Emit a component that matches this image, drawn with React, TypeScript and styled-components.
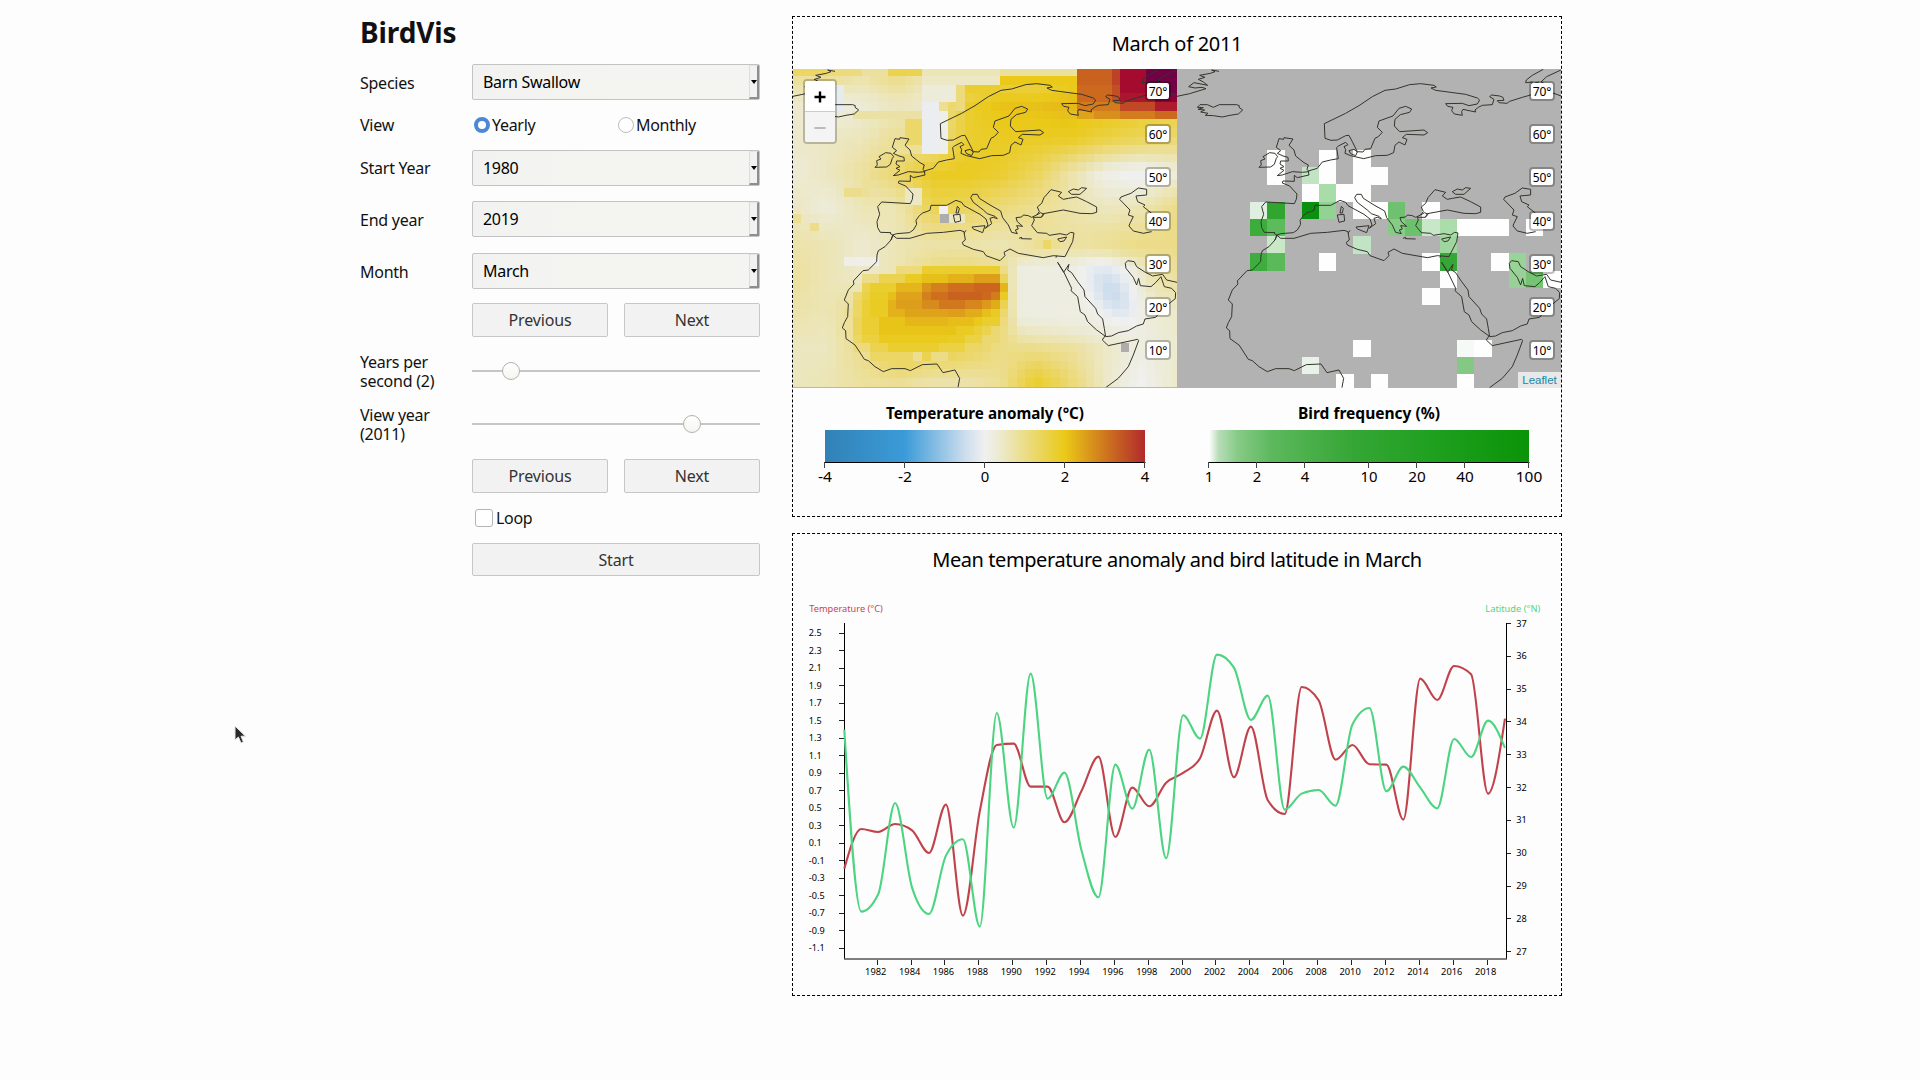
import React from "react";
import styled, { createGlobalStyle } from "styled-components";

const FONT = `"Noto Sans", "Open Sans", sans-serif`;

const GlobalStyle = createGlobalStyle`
  * { box-sizing: border-box; }
  body {
    margin: 0;
    height: 1080px;
    overflow: hidden;
    background: #fdfdfd;
    color: #000;
    font: 16px/18.5px ${FONT};
  }
`;

const Page = styled.main`
  display: flex;
  gap: 32px;
  padding: 16px 0 0 360px;
`;

const Sidebar = styled.section`
  width: 400px;
  color: #111;
`;

const Heading = styled.h1`
  margin: 0 0 15px;
  height: 33px;
  font-size: 28px;
  line-height: 33px;
  font-weight: 700;
  letter-spacing: -0.1px;
`;

const Row = styled.div<{ $h: number; $gap: number }>`
  display: grid;
  grid-template-columns: 112px 288px;
  align-items: center;
  height: ${(p) => p.$h}px;
  margin-bottom: ${(p) => p.$gap}px;
`;

const Name = styled.label<{ $drop?: number }>`
  white-space: pre-line;
  letter-spacing: -0.25px;
  padding-top: ${(p) => p.$drop ?? 0}px;
`;

const Select = styled.button`
  display: flex;
  align-items: stretch;
  justify-content: space-between;
  height: 100%;
  width: 100%;
  padding: 0 0 0 10px;
  border: 1px solid #c3c3c3;
  border-radius: 2px;
  background: linear-gradient(90deg, #f2f2f2, #f4f4f0 50%);
  font: 16px/34px ${FONT};
  color: #000;
`;

const SelectText = styled.span`
  letter-spacing: -0.3px;
`;

const Arrow = styled.span`
  display: flex;
  align-items: center;
  justify-content: center;
  width: 10px;
  border: solid;
  border-width: 1px 2px 2px 1px;
  border-color: #e4e4e4 #8e8e8e #8e8e8e #dcdcdc;
  background: #f2f2f2;
  &::after {
    content: "";
    border: 3px solid transparent;
    border-top: 4px solid #000;
    border-bottom: 0;
  }
`;

const Buttons = styled.div`
  grid-column: 2;
  display: flex;
  gap: 16px;
  height: 100%;
`;

const Button = styled.button`
  flex: 1;
  padding: 0;
  border: 1px solid #c6c6c6;
  border-radius: 2px;
  background: #f2f2f2;
  color: #333;
  font: 16px/30px ${FONT};
  letter-spacing: -0.15px;
`;

const Choices = styled.div`
  display: grid;
  grid-template-columns: 144px 144px;
`;

const Choice = styled.label<{ $gap: number; $pad: number; $second?: boolean }>`
  grid-column: ${(p) => (p.$second ? 2 : "auto")};
  display: flex;
  align-items: center;
  gap: ${(p) => p.$gap}px;
  padding-left: ${(p) => p.$pad}px;
  letter-spacing: -0.3px;
`;

const Radio = styled.span<{ $on?: boolean }>`
  width: 16px;
  height: 16px;
  border-radius: 50%;
  background: #fff;
  border: ${(p) => (p.$on ? "4.5px solid #4f87d6" : "1px solid #bdbdbd")};
`;

const Checkbox = styled.span`
  width: 18px;
  height: 18px;
  border: 1px solid #b4b4b4;
  border-radius: 3px;
  background: #fff;
`;

const Slider = styled.div`
  display: flex;
  align-items: center;
  height: 20px;
  margin-top: -1px;
  background: linear-gradient(#c6c6c6, #c6c6c6) center / 100% 2px no-repeat;
`;

const Thumb = styled.span`
  width: 18px;
  height: 18px;
  border-radius: 50%;
  border: 1px solid #b3b3ab;
  background: linear-gradient(#fff, #f5f5f0);
`;

const Panels = styled.section`
  display: flex;
  flex-direction: column;
  gap: 16px;
  width: 770px;
`;

const Panel = styled.article<{ $h: number }>`
  height: ${(p) => p.$h}px;
  border: 1px dashed #000;
`;

const Title = styled.h2<{ $h: number; $line: number; $ls: number }>`
  margin: 0;
  height: ${(p) => p.$h}px;
  line-height: ${(p) => p.$line}px;
  font-size: 20px;
  font-weight: 400;
  text-align: center;
  letter-spacing: ${(p) => p.$ls}px;
`;

const Maps = styled.div`
  display: grid;
  grid-template-columns: 384px 384px;
  height: 319px;
`;

const MapBox = styled.div`
  position: relative;
  overflow: hidden;
  background: #b2b2b2;
  svg { display: block; }
`;

const ZoomControl = styled.div`
  position: absolute;
  left: 10px;
  top: 10px;
  width: 34px;
  border: 2px solid rgba(0, 0, 0, 0.22);
  border-radius: 4px;
  background-clip: padding-box;
`;

const ZoomKey = styled.div<{ $off?: boolean }>`
  height: ${(p) => (p.$off ? 30 : 31)}px;
  border-bottom: ${(p) => (p.$off ? 0 : 1)}px solid #ccc;
  border-radius: ${(p) => (p.$off ? "0 0 2px 2px" : "2px 2px 0 0")};
  background: ${(p) => (p.$off ? "#f4f4f4" : "#fff")};
  display: grid;
  place-items: center;
  padding-top: 2px;
  color: ${(p) => (p.$off ? "#bbb" : "#000")};
`;

const LatBadge = styled.span`
  position: absolute;
  right: 6px;
  transform: translateY(-50%);
  width: 26px;
  height: 20px;
  border: 2px solid rgba(0, 0, 0, 0.25);
  border-radius: 4px;
  background: #fff;
  background-clip: padding-box;
  font-size: 12px;
  line-height: 17px;
  text-align: center;
  letter-spacing: -0.2px;
`;

const Credit = styled.a`
  position: absolute;
  right: 0;
  bottom: 0;
  width: 43px;
  height: 16px;
  background: rgba(255, 255, 255, 0.7);
  color: #1a86a4;
  font: 11.5px/16px "Liberation Sans", Arial, sans-serif;
  text-align: center;
`;

const Legends = styled.div`
  display: grid;
  grid-template-columns: 384px 384px;
`;

const Cursor = styled.svg`
  position: absolute;
  left: 234px;
  top: 725px;
`;

/* ---------- map data ---------- */

const COAST_NORTH = [
  "M24 109L62 101L111 86L99 82L78 84L59 80L75 68L116 76L103 66L88 58L108 52L92 46L124 40L138 35L128 30L150 34",
  "M85 142L93 134L115 134L133 142L151 134L203 134L211 137L210 142L221 150L208 162L183 166L160 171L133 167L109 166L117 160L95 156L107 150L87 148L103 143Z",
  "M1176 108L1155 100L1085 105L1060 112L1022 124L1014 130L990 128L985 122L1005 121L1002 112L992 108L968 105L962 110L975 118L970 134L940 136L928 142L918 150L920 156L905 153L882 148L878 155L880 166L856 162L848 152L852 142L836 139L830 131L880 130L900 137L925 132L932 120L925 114L890 103L800 91L786 84L802 81L795 76L755 71L722 74L680 87L648 91L610 110L570 137L530 160L466 191L468 235L486 241L505 240L530 227L540 226L550 245L565 275L582 276L588 268L605 266L618 235L628 230L640 217L625 202L630 183L672 168L690 145L710 139L728 147L722 157L694 164L678 178L676 198L692 215L765 210L776 218L765 225L712 223L700 233L714 238L708 255L690 246L678 256L674 278L655 286L620 287L584 296L545 287L528 280L530 268L525 260L537 254L530 247L508 258L503 263L508 296L485 300L460 306L445 325L418 333L420 345L385 353L376 346L376 364L342 363L340 369L362 378L384 402L382 418L376 431L290 426L278 440L284 463L276 485L278 503L286 517L318 518",
  "M540 272L555 268L565 276L560 287L545 281Z",
  "M345 233L372 237L360 256L375 270L380 288L395 300L405 308L418 315L414 328L420 335L400 337L370 335L340 345L325 347L345 331L333 325L345 320L333 312L335 303L358 303L357 292L342 288L325 280L335 272L322 262L330 236L344 238Z",
  "M326 290L318 280L302 278L282 290L288 297L275 302L277 315L270 322L305 321L316 313L322 295Z",
  "M1123 28L1090 46L1072 60L1070 68L1090 66L1088 72L1110 66",
  "M1176 30L1133 50L1116 66L1130 72",
  "M1085 388L1060 384L1038 400L1008 411L1004 418L1035 450L1030 465L1045 470L1035 490L1032 498L1045 513L1075 520L1100 515",
  "M1085 388L1085 405L1053 408L1058 425L1080 435L1075 440L1100 460L1088 475",
];

const COAST_MED = [
  "M30 145L38 150L50 146L88 143L100 135L110 118L108 106L118 92L128 84L150 76L153 61L200 61L228 46L245 52L252 62L300 88L318 102L324 120L316 130L335 116L330 100L340 97L352 101L345 94L322 86L310 75L280 52L272 38L278 28L292 28L298 40L330 60L362 78L368 98L385 120L395 142L412 146L406 135L415 132L410 122L428 124L412 110L408 98L425 96L430 90L445 92L455 97L470 90L478 80L472 66L485 55L492 38L513 14L545 22L535 33L550 43L565 40L590 36L620 50L650 66L650 82L635 86L600 85L550 75L490 86L484 97L460 97L463 105L455 122L472 143L500 145L508 151L540 146L560 150L572 142L582 144L578 170L555 215L520 212L490 218L415 205L390 192L372 202L375 212L360 227L318 212L310 200L280 193L250 180L247 172L256 165L252 140L240 136L190 142L140 145L90 160L50 160L38 150L33 165",
  "M470 90L482 83L492 88L484 97",
  "M565 20L580 12L595 15L605 8L620 10L600 28L575 28Z",
  "M252 145L258 136M530 212L528 218",
  "M232 64L238 70L235 84L228 84Z",
  "M220 90L240 88L242 108L225 112Z",
  "M276 126L315 122L308 143L280 132Z",
  "M417 160L425 157L424 161L455 162",
  "M533 162L560 156L552 168L540 170Z",
];

const COAST_SOUTH = [
  "M325 45L318 60L300 80L280 92L276 105L275 125L250 150L234 152L205 183L207 192L190 210L178 240L190 252L188 290L178 308L172 324L182 332L183 356L210 375L222 393L238 418L250 422L270 440L295 455L320 446L360 446L376 452L412 434L456 432L474 458L510 450L524 475L519 503",
  "M818 127L836 155L860 205L858 212L878 230L886 275L900 285L908 305L935 330L960 348L952 360L970 377L1058 358L1061 362L1045 405L1030 440L1000 475L962 503",
  "M818 127L836 157L852 133L848 150L860 158L878 185L897 210L900 230L932 265L938 282L953 297L958 325L962 350L980 348L1000 338L1030 332L1055 318L1075 312L1080 297L1112 292L1130 270L1156 248L1171 236L1172 218L1160 205L1138 200L1128 170L1112 188L1098 200L1066 197L1061 175L1055 195L1045 172L1023 145L1021 130L1028 122L1048 125L1055 140L1078 155L1103 168L1133 163L1145 180L1176 187",
];

function Coast() {
  return (
    <g fill="none" stroke="#34342c" strokeWidth="3" strokeLinejoin="round">
      <g transform="translate(-8 -9) scale(.3333)">
        {COAST_NORTH.map((d) => <path key={d} d={d} />)}
      </g>
      <g transform="translate(87 116) scale(.3333)">
        {COAST_MED.map((d) => <path key={d} d={d} />)}
      </g>
      <g transform="translate(-8 151) scale(.3333)">
        {COAST_SOUTH.map((d) => <path key={d} d={d} />)}
      </g>
    </g>
  );
}

/* anomaly samples, one every 104 units east and south */
const FIELD = [
  [1.0, 1.2, 0.8, 1.2, 0.6, 0.6, 1.2, 1.2, 1.6, 2.5, 2.5, 2.5],
  [0.4, 0.15, 0.3, 0.5, 0.4, 1.8, 2.1, 2.1, 2.2, 2.2, 2.0, 1.8],
  [0.4, 0.45, 0.55, 0.9, 0.7, 1.75, 1.9, 1.9, 1.9, 1.6, 1.4, 1.2],
  [0.3, 0.5, 0.8, 1.25, 1.9, 1.95, 1.8, 1.4, 0.7, 0.1, -0.1, 0.2],
  [0.5, 0.25, 0.6, 0.6, 1.5, 1.4, 1.1, 0.9, 0.7, 0.5, 0.6, 1.0],
  [0.7, 0.6, 0.35, 0.6, 0.7, 0.7, 0.6, 0.8, 0.8, 0.9, 1.0, 1.0],
  [0.8, 0.6, 0.4, 0.6, 1.1, 1.2, 1.0, 0.5, 0.3, 0.3, 0.6, 0.8],
  [0.7, 0.6, 1.0, 1.6, 1.8, 1.7, 1.1, 0.6, 0.3, 0.2, 0.3, 0.4],
  [0.5, 0.5, 1.0, 1.8, 1.75, 1.5, 1.0, 0.9, 0.8, 0.45, 0.2, 0.35],
  [0.5, 0.6, 0.8, 0.9, 0.7, 0.7, 0.9, 1.8, 1.2, 0.45, 0.0, 0.4],
];

/* x0, y0, x1, y1, anomaly */
const PATCHES: number[][] = [
  [24, 27, 128, 48, 1.3], [128, 27, 230, 48, 1.1], [230, 27, 308, 48, 0.8], [308, 27, 411, 48, 1.5],
  [411, 27, 645, 48, 0.6], [645, 27, 879, 48, 0.8], [411, 48, 645, 75, 0.45], [645, 48, 879, 75, 2.0],
  [515, 75, 540, 152, 1.1], [540, 75, 645, 101, 1.8],
  [150, 75, 180, 152, -0.15], [204, 152, 411, 178, 0.75], [360, 178, 411, 256, 1.25],
  [411, 75, 515, 127, 0.25], [411, 127, 465, 282, -0.08], [465, 152, 490, 282, 0.08],
  [282, 256, 411, 282, 0.85], [180, 385, 230, 411, 0.95], [230, 360, 256, 411, 0.85], [360, 385, 411, 436, 0.45],
  [24, 462, 50, 488, 0.9], [75, 488, 101, 514, 0.95],
  [465, 436, 490, 462, 0], [490, 462, 540, 488, 0.5],
  [182, 588, 282, 618, 0.1],
  [750, 530, 828, 565, 0.9], [776, 535, 804, 560, 1.3],
  [879, 27, 980, 75, 3.1], [980, 27, 1007, 75, 3.6], [1007, 27, 1085, 75, 4.5], [1085, 27, 1176, 75, 5.3],
  [879, 75, 980, 127, 3.0], [980, 75, 1007, 127, 3.4], [1007, 75, 1110, 101, 4.5], [1110, 75, 1176, 101, 5.3],
  [1007, 101, 1110, 127, 4.3], [1110, 101, 1176, 127, 5.0],
  [879, 127, 1007, 152, 2.8], [1007, 127, 1110, 152, 3.5], [1110, 127, 1176, 152, 4.2],
  [879, 152, 930, 178, 2.4], [930, 152, 1007, 178, 2.6], [1007, 152, 1110, 178, 2.8], [1110, 152, 1176, 178, 3.0],
];

/* Saharan hot spot: top edge of each row, then [start x, anomaly] steps */
const HOTSPOT: [number, [number, number][]][] = [
  [618, [[333, 1.1], [411, 1.8], [645, 1.0], [672, 0]]],
  [644, [[230, 1.0], [282, 1.5], [360, 1.9], [411, 2.1], [490, 2.25], [566, 2.45], [645, 1.4], [672, 0]]],
  [669, [[230, 1.5], [256, 1.8], [333, 2.2], [411, 2.55], [440, 2.75], [490, 2.95], [570, 3.05], [645, 2.2], [672, 0]]],
  [695, [[204, 1.2], [230, 1.6], [256, 1.85], [308, 2.1], [333, 2.4], [411, 2.75], [440, 2.95], [490, 3.1], [592, 3.0], [620, 2.8], [645, 1.9], [672, 0]]],
  [721, [[204, 1.3], [230, 1.7], [256, 1.9], [308, 2.25], [333, 2.45], [411, 2.65], [465, 2.85], [540, 2.7], [592, 2.5], [620, 2.3], [645, 1.5], [672, 0]]],
  [747, [[204, 1.3], [230, 1.7], [256, 1.9], [308, 2.25], [360, 2.4], [490, 2.45], [540, 2.3], [592, 2.1], [620, 1.9], [645, 1.2], [672, 0]]],
  [773, [[204, 1.4], [230, 1.75], [282, 2.05], [360, 2.2], [500, 2.12], [566, 2.0], [592, 1.8], [645, 1.1], [672, 0]]],
  [799, [[204, 1.4], [230, 1.75], [282, 2.05], [515, 1.9], [566, 1.7], [592, 1.5], [620, 1.2], [645, 0]]],
  [825, [[204, 1.3], [230, 1.65], [282, 1.95], [490, 1.85], [540, 1.6], [592, 1.2], [645, 0]]],
  [850, [[204, 1.1], [256, 1.5], [308, 1.8], [465, 1.6], [540, 1.3], [592, 0]]],
  [876, [[204, 0.9], [256, 1.3], [385, 0.9], [411, 1.5], [440, 1.0], [490, 0]]],
  [902, [[411, 1.1], [440, 0]]],
];

const STOPS: [number, number[]][] = [
  [-4, [49, 130, 182]], [-2, [60, 155, 216]], [-0.5, [206, 222, 238]], [0, [240, 240, 240]],
  [0.3, [236, 235, 215]], [1, [236, 220, 135]], [2, [234, 201, 24]], [3, [205, 105, 30]], [4, [178, 38, 44]], [4.7, [160, 0, 48]], [5.6, [90, 0, 80]],
];

function shade(v: number) {
  let i = 1;
  while (i < STOPS.length - 1 && v > STOPS[i][0]) i++;
  const [a, ca] = STOPS[i - 1];
  const [b, cb] = STOPS[i];
  const t = Math.max(0, Math.min(1, (v - a) / (b - a)));
  return `rgb(${ca.map((c, k) => Math.round(c + (cb[k] - c) * t)).join(",")})`;
}

const ramp = (a: number, b: number, x: number) => Math.max(0, Math.min(1, (x - a) / (b - a)));

function anomaly(x: number, y: number) {
  const fx = Math.min(10.999, (x - 24) / 104);
  const fy = Math.min(8.999, Math.max(0, (y - 27) / 104));
  const i = Math.floor(fx), j = Math.floor(fy);
  const u = fx - i, w = fy - j;
  let v =
    (FIELD[j][i] * (1 - u) + FIELD[j][i + 1] * u) * (1 - w) +
    (FIELD[j + 1][i] * (1 - u) + FIELD[j + 1][i + 1] * u) * w;
  const pale = ramp(665, 710, x) * ramp(1110, 1030, x) * ramp(575, 625, y) * ramp(860, 770, y);
  v += (0.18 - v) * pale;
  for (const [x0, y0, x1, y1, p] of PATCHES) if (x > x0 && x < x1 && y > y0 && y < y1) v = p;
  const row = HOTSPOT.find(([top]) => y > top && y < top + 25.9);
  if (row) {
    let s = 0;
    for (const [sx, sv] of row[1]) if (x > sx) s = sv;
    if (s) v = s;
  }
  const along = ((x - 980) * 0.55 + (y - 695) * 0.83) / 95;
  const across = ((x - 980) * 0.83 - (y - 695) * 0.55) / 55;
  return v - 0.72 * Math.exp(-(along ** 2) - across ** 2);
}

const STEP = 25.85;
const TEMP_CELLS = Array.from({ length: 38 * 45 }, (_, k) => {
  const c = k % 45;
  const r = Math.floor(k / 45);
  const x = 23.2 + c * STEP;
  const y = 48.6 + (r - 1) * STEP;
  return { x, y, fill: shade(anomaly(x + 13, y + 13)) };
});

const W = "#fefefe";
const BIRD_CELLS: [number, number, string][] = [
  [0, 1, W], [0, 4, W], [0, 6, W],
  [1, 1, W], [1, 3, "#c3e3c5"], [1, 4, W], [1, 6, W], [1, 7, W],
  [2, 3, W], [2, 4, "#a8dca8"], [2, 5, W], [2, 6, W],
  [3, 0, "#e0f0e0"], [3, 1, "#30a530"], [3, 3, "#09900e"], [3, 4, "#92d292"], [3, 6, W], [3, 7, W], [3, 8, "#6fc06f"], [3, 10, W],
  [4, 0, "#3cac3c"], [4, 1, "#5cbc5c"], [4, 8, "#86cc86"], [4, 9, "#6cc26c"], [4, 10, "#c8e6c8"], [4, 11, "#aaddaa"], [4, 12, W], [4, 13, W], [4, 14, W], [4, 16, W],
  [5, 1, "#c8e8c8"], [5, 6, "#c2e4c4"], [5, 11, "#9fd69f"],
  [6, 0, "#3eac3e"], [6, 1, "#5aba5a"], [6, 4, W], [6, 10, W], [6, 11, "#36a636"], [6, 14, W], [6, 15, "#98d498"],
  [7, 11, W], [7, 15, "#98d098"], [7, 16, "#74c474"], [7, 17, W], [7, 18, W],
  [8, 10, W],
  [11, 6, W], [11, 12, "#f6faf6"], [11, 13, W],
  [12, 3, "#e8f2e8"], [12, 12, "#84c884"],
  [13, 5, W], [13, 7, W], [13, 12, W],
];

const LATITUDES: [number, number][] = [[70, 22], [60, 65], [50, 108], [40, 152], [30, 195], [20, 238], [10, 281]];

function LatBadges() {
  return (
    <>
      {LATITUDES.map(([deg, y]) => (
        <LatBadge key={deg} style={{ top: y }}>{deg}°</LatBadge>
      ))}
    </>
  );
}

/* ---------- svg text ---------- */

type LabelProps = {
  x: number; y: number; w: number; size?: number; bold?: boolean; anchor?: "start" | "middle"; fill?: string; children: React.ReactNode;
};

function Label({ x, y, w, size = 16, bold, anchor = "middle", fill = "#000", children }: LabelProps) {
  return (
    <text x={x} y={y} fontSize={size} fontWeight={bold ? 700 : 400} fontFamily="Noto Sans, sans-serif" textAnchor={anchor} fill={fill} textLength={w} lengthAdjust="spacingAndGlyphs">
      {children}
    </text>
  );
}

type LegendProps = { title: string; titleWidth: number; id: string; stops: [number, string][]; ticks: [number, string, number][] };

function Legend({ title, titleWidth, id, stops, ticks }: LegendProps) {
  return (
    <svg width="384" height="127">
      <defs>
        <linearGradient id={id}>
          {stops.map(([o, c]) => <stop key={o} offset={o} stopColor={c} />)}
        </linearGradient>
      </defs>
      <Label x={192} y={31} w={titleWidth} bold size={16}>{title}</Label>
      <rect x="32" y="42" width="320" height="32" fill={`url(#${id})`} />
      <path d="M31.5 74.5H352.5" stroke="#000" />
      {ticks.map(([t, text, w]) => (
        <React.Fragment key={text}>
          <path d={`M${Math.round(32 + t * 320) - 0.5} 74V80`} stroke="#444" />
          <Label x={32 + t * 320} y={94} w={w} size={15.2}>{text}</Label>
        </React.Fragment>
      ))}
    </svg>
  );
}

const TEMP_STOPS: [number, string][] = [
  [0, "#3182b6"], [0.25, "#3b9bd8"], [0.44, "#cedeee"], [0.5, "#f0f0f0"], [0.54, "#ecebd4"], [0.75, "#eac918"], [0.87, "#d07a1e"], [1, "#b22a2c"],
];
const BIRD_STOPS: [number, string][] = [
  [0, "#ffffff"], [0.03, "#b8ddb8"], [0.09, "#86ca86"], [0.2, "#5cb85c"], [0.45, "#35a635"], [0.7, "#1fa01f"], [1, "#0a9308"],
];

/* ---------- line chart ---------- */

const TEMPERATURE = [
  805, 686, 695, 671, 690, 758, 613, 946, 632, 434, 430, 559, 559, 666, 572, 469, 710, 562, 618, 547,
  518, 474, 331, 531, 379, 600, 641, 260, 300, 478, 434, 492, 493, 658, 235, 299, 197, 222, 580, 355,
];
const LATITUDE = [
  388, 934, 882, 608, 862, 941, 766, 717, 979, 338, 682, 220, 595, 517, 750, 891, 493, 625, 448, 774,
  345, 415, 163, 202, 359, 286, 628, 580, 569, 616, 372, 323, 573, 499, 562, 624, 416, 470, 361, 443,
];

const X0 = 51.3;
const DX = 16.94;

/* monotone cubic through the yearly values */
function curve(values: number[]) {
  const p = values.map((v, i) => [X0 + i * DX, 5.3 + v / 3]);
  const n = p.length;
  const s = p.slice(1).map((q, i) => (q[1] - p[i][1]) / DX);
  const m = p.map((_, i) => {
    if (i === 0 || i === n - 1) return 0;
    const a = s[i - 1], b = s[i];
    return (Math.sign(a) + Math.sign(b)) * Math.min(Math.abs(a), Math.abs(b), 0.25 * Math.abs(a + b)) || 0;
  });
  m[0] = (3 * s[0] - m[1]) / 2;
  m[n - 1] = (3 * s[n - 2] - m[n - 2]) / 2;
  let d = `M${p[0]}`;
  for (let i = 1; i < n; i++) {
    const h = DX / 3;
    d += `C${p[i - 1][0] + h},${p[i - 1][1] + h * m[i - 1]} ${p[i][0] - h},${p[i][1] - h * m[i]} ${p[i]}`;
  }
  return d;
}

const TEMP_TICKS = Array.from({ length: 19 }, (_, i) => (2.5 - i * 0.2).toFixed(1));
const LAT_TICKS = Array.from({ length: 11 }, (_, i) => 37 - i);
const YEARS = Array.from({ length: 19 }, (_, i) => 1982 + i * 2);

function Chart() {
  return (
    <svg width="768" height="399">
      <Label x={16.3} y={17} w={73.5} size={9.6} anchor="start" fill="#c74450">Temperature (°C)</Label>
      <Label x={692.3} y={17} w={55} size={9.6} anchor="start" fill="#4fd783">Latitude (°N)</Label>
      {TEMP_TICKS.map((t, i) => {
        const y = 37.8 + i * 17.49;
        return (
          <React.Fragment key={t}>
            <path d={`M46 ${Math.round(y) + 0.5}H51`} stroke="#222" />
            <Label x={15.8} y={y + 3.5} w={t.startsWith("-") ? 15.8 : 12.8} size={9.3} anchor="start">{t}</Label>
          </React.Fragment>
        );
      })}
      {LAT_TICKS.map((t, i) => {
        const y = 28 + i * 32.83;
        return (
          <React.Fragment key={t}>
            <path d={`M714 ${Math.round(y) + 0.5}H718`} stroke="#222" />
            <Label x={723.2} y={y + 3.5} w={10.5} size={9.3} anchor="start">{t}</Label>
          </React.Fragment>
        );
      })}
      {YEARS.map((t, i) => {
        const x = X0 + (i + 1) * 2 * DX;
        return (
          <React.Fragment key={t}>
            <path d={`M${Math.floor(x) - 0.5} 365V370`} stroke="#222" />
            <Label x={x - 2.4} y={380.3} w={21.3} size={9.3}>{t}</Label>
          </React.Fragment>
        );
      })}
      <path d="M51.5 28V364" stroke="#000" />
      <path d="M713.5 28V364" stroke="#000" />
      <path d="M51 364H714" stroke="#555" strokeWidth="1.6" />
      <path d={curve(TEMPERATURE)} fill="none" stroke="#c0434c" strokeWidth="2.1" />
      <path d={curve(LATITUDE)} fill="none" stroke="#4cd480" strokeWidth="2.1" />
    </svg>
  );
}

function SelectField({ value }: { value: string }) {
  return (
    <Select>
      <SelectText>{value}</SelectText>
      <Arrow />
    </Select>
  );
}

export default function App() {
  return (
    <Page>
      <GlobalStyle />
      <Sidebar>
        <Heading>BirdVis</Heading>
        <Row $h={35} $gap={11}><Name $drop={2}>Species</Name><SelectField value="Barn Swallow" /></Row>
        <Row $h={30} $gap={10}>
          <Name>View</Name>
          <Choices>
            <Choice $gap={2} $pad={2}><Radio $on />Yearly</Choice>
            <Choice $gap={2} $pad={2}><Radio />Monthly</Choice>
          </Choices>
        </Row>
        <Row $h={35} $gap={16}><Name $drop={1}>Start Year</Name><SelectField value="1980" /></Row>
        <Row $h={35} $gap={17}><Name $drop={2}>End year</Name><SelectField value="2019" /></Row>
        <Row $h={34} $gap={16}><Name $drop={2}>Month</Name><SelectField value="March" /></Row>
        <Row $h={34} $gap={16}><Buttons><Button>Previous</Button><Button>Next</Button></Buttons></Row>
        <Row $h={37} $gap={16}>
          <Name>{"Years per\nsecond (2)"}</Name>
          <Slider><Thumb style={{ marginLeft: 30 }} /></Slider>
        </Row>
        <Row $h={37} $gap={16}>
          <Name>{"View year\n(2011)"}</Name>
          <Slider><Thumb style={{ marginLeft: 211 }} /></Slider>
        </Row>
        <Row $h={34} $gap={15}><Buttons><Button>Previous</Button><Button>Next</Button></Buttons></Row>
        <Row $h={20} $gap={15}><Choice $gap={3} $pad={3} $second><Checkbox />Loop</Choice></Row>
        <Row $h={33} $gap={0}><Buttons><Button>Start</Button></Buttons></Row>
      </Sidebar>

      <Panels>
        <Panel $h={501}>
          <Title $h={52} $line={53} $ls={-0.3}>March of 2011</Title>
          <Maps>
            <MapBox>
              <svg width="384" height="319">
                <g transform="translate(-8 -9) scale(.3333)" shapeRendering="crispEdges">
                  {TEMP_CELLS.map((c) => <rect key={`${c.x},${c.y}`} x={c.x} y={c.y} width="26.5" height="26.5" fill={c.fill} />)}
                  <rect x="465" y="462" width="26" height="26" fill="#adadab" />
                  <rect x="1007" y="850" width="26" height="26" fill="#adadab" />
                </g>
                <Coast />
                <path d="M0 318.6H384" stroke="#b2b2b2" />
              </svg>
              <ZoomControl>
                <ZoomKey>
                  <svg width="12" height="12"><path d="M6 .5V11.5M.5 6H11.5" stroke="currentColor" strokeWidth="2.4" /></svg>
                </ZoomKey>
                <ZoomKey $off>
                  <svg width="12" height="12"><path d="M.5 6H11.5" stroke="currentColor" strokeWidth="2" /></svg>
                </ZoomKey>
              </ZoomControl>
              <LatBadges />
            </MapBox>
            <MapBox>
              <svg width="384" height="319">
                <g transform="translate(-8 -9) scale(.3333)" shapeRendering="crispEdges">
                  {BIRD_CELLS.map(([r, c, fill]) => <rect key={`${r},${c}`} x={243 + c * 51.75} y={270 + r * 51.75} width="51.9" height="51.9" fill={fill} />)}
                </g>
                <Coast />
              </svg>
              <LatBadges />
              <Credit>Leaflet</Credit>
            </MapBox>
          </Maps>
          <Legends>
            <Legend
              id="temperature" title="Temperature anomaly (°C)" titleWidth={198} stops={TEMP_STOPS}
              ticks={[[0, "-4", 14], [0.25, "-2", 14], [0.5, "0", 8.5], [0.75, "2", 8.5], [1, "4", 8.5]]}
            />
            <Legend
              id="frequency" title="Bird frequency (%)" titleWidth={142} stops={BIRD_STOPS}
              ticks={[[0, "1", 8.5], [0.15, "2", 8.5], [0.3, "4", 8.5], [0.5, "10", 17], [0.65, "20", 17.5], [0.8, "40", 17.5], [1, "100", 26.5]]}
            />
          </Legends>
        </Panel>
        <Panel $h={463}>
          <Title $h={61} $line={52} $ls={-0.42}>Mean temperature anomaly and bird latitude in March</Title>
          <Chart />
        </Panel>
      </Panels>

      <Cursor width="14" height="20" viewBox="0 0 14 20">
        <path d="M1 1V15L4.4 12L7 18L9.4 17L7 11.2H11.5Z" fill="#2a2a2a" stroke="#e8e8e8" strokeWidth="1" />
      </Cursor>
    </Page>
  );
}
